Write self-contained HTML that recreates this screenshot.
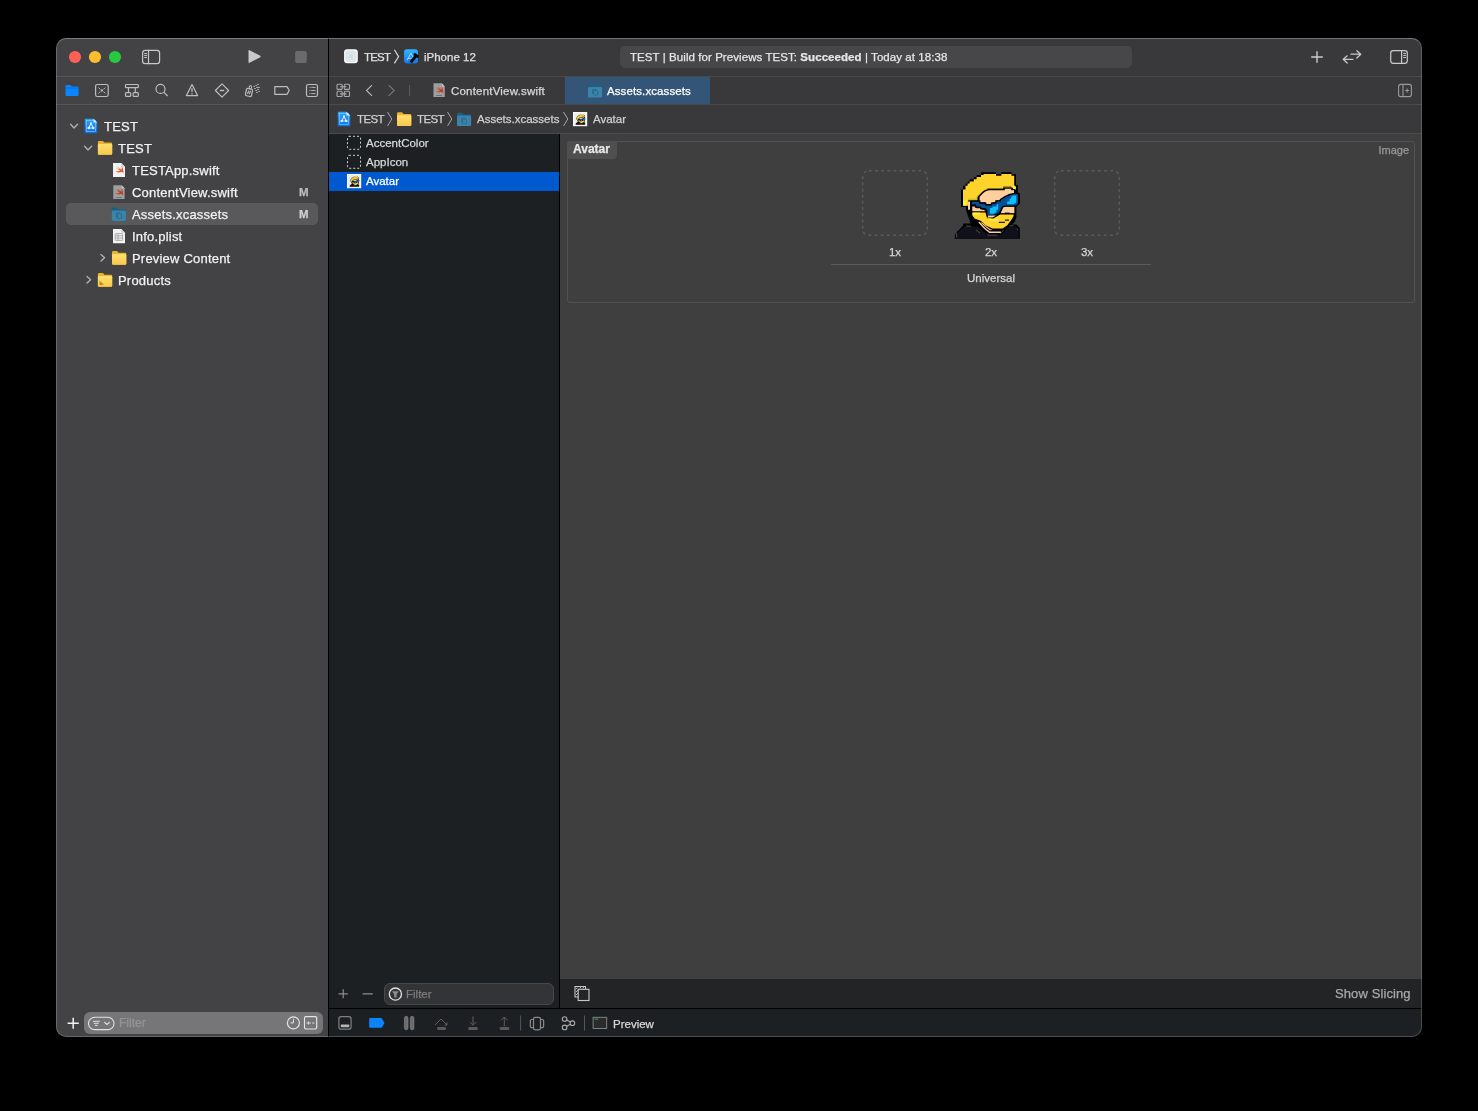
<!DOCTYPE html>
<html><head><meta charset="utf-8">
<style>
*{margin:0;padding:0;box-sizing:border-box}
html,body{width:1478px;height:1111px;background:#000;overflow:hidden;font-family:"Liberation Sans",sans-serif;color:#dfdfdf}
.a{position:absolute}
.t{position:absolute;white-space:nowrap;line-height:1;will-change:transform;-webkit-text-stroke:0.25px currentColor}
#clip{position:absolute;left:0;top:0;width:1478px;height:1111px;clip-path:inset(38px 56px 74px 56px round 10px)}
#ov{position:absolute;left:0;top:0}
#winb{position:absolute;left:56px;top:38px;width:1366px;height:999px;border-radius:10px;border:1px solid rgba(255,255,255,0.2);border-top-color:rgba(255,255,255,0.3);pointer-events:none}
</style></head><body>
<div id="clip">
<div class="a" style="left:56px;top:38px;width:272px;height:999px;background:#434345;"></div>
<div class="a" style="left:56px;top:76px;width:272px;height:1px;background:#555557;"></div>
<div class="a" style="left:56px;top:104px;width:272px;height:1px;background:#555557;"></div>
<div class="a" style="left:328px;top:38px;width:1px;height:999px;background:#000;"></div>
<div class="a" style="left:329px;top:38px;width:1093px;height:38px;background:#39393c;"></div>
<div class="a" style="left:329px;top:76px;width:1093px;height:1px;background:#4a4a4c;"></div>
<div class="a" style="left:329px;top:77px;width:1093px;height:27px;background:#39393c;"></div>
<div class="a" style="left:565px;top:77px;width:145px;height:27px;background:#335577;"></div>
<div class="a" style="left:329px;top:104px;width:1093px;height:1px;background:#4a4a4c;"></div>
<div class="a" style="left:329px;top:105px;width:1093px;height:28px;background:#39393c;"></div>
<div class="a" style="left:329px;top:133px;width:1093px;height:1px;background:#4a4a4c;"></div>
<div class="a" style="left:329px;top:134px;width:230px;height:874px;background:#1d2022;"></div>
<div class="a" style="left:329px;top:172px;width:230px;height:19px;background:#0059cf;"></div>
<div class="a" style="left:559px;top:134px;width:1px;height:874px;background:#000;"></div>
<div class="a" style="left:560px;top:134px;width:862px;height:845px;background:#3f3f3f;"></div>
<div class="a" style="left:560px;top:979px;width:862px;height:29px;background:#232426;"></div>
<div class="a" style="left:329px;top:1008px;width:1093px;height:1px;background:#000;"></div>
<div class="a" style="left:329px;top:1009px;width:1093px;height:28px;background:#1d2022;"></div>
<div class="a" style="left:66px;top:203px;width:252px;height:22px;background:#59595b;border-radius:5px;"></div>
<div class="t" style="top:52.27px;font-size:11.5px;color:#e0e0e0;letter-spacing:-0.8px;left:363.5px;">TEST</div>
<div class="t" style="top:52.27px;font-size:11.5px;color:#e0e0e0;left:423.5px;">iPhone 12</div>
<div class="a" style="left:620px;top:46px;width:512px;height:22px;background:#474749;border-radius:5px;"></div>
<div class="t" style="top:52.27px;font-size:11.5px;color:#e6e6e6;letter-spacing:0.07px;left:629.5px;">TEST | Build for Previews TEST: <b>Succeeded</b> | Today at 18:38</div>
<div class="t" style="top:85.77px;font-size:11.5px;color:#d8d8d8;letter-spacing:0.2px;left:450.5px;">ContentView.swift</div>
<div class="t" style="top:85.77px;font-size:11.5px;color:#ffffff;letter-spacing:0.1px;left:606.5px;">Assets.xcassets</div>
<div class="t" style="top:114.27px;font-size:11.5px;color:#d0d0d0;letter-spacing:-0.6px;left:356.5px;">TEST</div>
<div class="t" style="top:114.27px;font-size:11.5px;color:#d0d0d0;letter-spacing:-0.6px;left:416.5px;">TEST</div>
<div class="t" style="top:114.27px;font-size:11.5px;color:#d0d0d0;left:476.5px;">Assets.xcassets</div>
<div class="t" style="top:114.27px;font-size:11.5px;color:#d0d0d0;left:592.5px;">Avatar</div>
<div class="t" style="top:120.00px;font-size:13px;color:#f2f2f2;letter-spacing:0.2px;left:104px;">TEST</div>
<div class="t" style="top:142.00px;font-size:13px;color:#f2f2f2;letter-spacing:0.2px;left:118px;">TEST</div>
<div class="t" style="top:164.00px;font-size:13px;color:#f2f2f2;letter-spacing:0.2px;left:132px;">TESTApp.swift</div>
<div class="t" style="top:186.00px;font-size:13px;color:#f2f2f2;letter-spacing:0.2px;left:132px;">ContentView.swift</div>
<div class="t" style="top:208.00px;font-size:13px;color:#f2f2f2;letter-spacing:0.2px;left:132px;">Assets.xcassets</div>
<div class="t" style="top:230.00px;font-size:13px;color:#f2f2f2;letter-spacing:0.2px;left:132px;">Info.plist</div>
<div class="t" style="top:252.00px;font-size:13px;color:#f2f2f2;letter-spacing:0.2px;left:132px;">Preview Content</div>
<div class="t" style="top:274.00px;font-size:13px;color:#f2f2f2;letter-spacing:0.2px;left:118px;">Products</div>
<div class="t" style="top:186.67px;font-size:11.5px;color:#bdbdbd;font-weight:700;left:298.8px;">M</div>
<div class="t" style="top:208.67px;font-size:11.5px;color:#d0d0d0;font-weight:700;left:298.8px;">M</div>
<div class="a" style="left:84px;top:1012px;width:239px;height:22px;background:#767678;border-radius:6px;"></div>
<div class="t" style="top:1016.84px;font-size:12px;color:#949496;left:118.5px;">Filter</div>
<div class="t" style="top:138.27px;font-size:11.5px;color:#d8d8d8;left:365.5px;">AccentColor</div>
<div class="t" style="top:157.27px;font-size:11.5px;color:#d8d8d8;left:365.5px;">AppIcon</div>
<div class="t" style="top:176.27px;font-size:11.5px;color:#ffffff;left:365.5px;">Avatar</div>
<div class="a" style="left:384px;top:983px;width:170px;height:22px;background:#333436;border-radius:6px;border:1px solid #47484a;"></div>
<div class="t" style="top:989.27px;font-size:11.5px;color:#7c7c7e;left:406px;">Filter</div>
<div class="t" style="top:987.00px;font-size:13px;color:#a9a9a9;letter-spacing:0.1px;left:1334.5px;">Show Slicing</div>
<div class="t" style="top:1018.77px;font-size:11.5px;color:#d8d8d8;left:612.5px;">Preview</div>
<div class="a" style="left:567px;top:141px;width:848px;height:162px;border:1px solid #525252;border-radius:3px;"></div>
<div class="a" style="left:567px;top:141px;width:50px;height:18px;background:#4f4f4f;border-radius:3px 0 4px 0;"></div>
<div class="t" style="top:143.14px;font-size:12px;color:#e8e8e8;font-weight:700;left:572.5px;">Avatar</div>
<div class="t" style="top:144.69px;font-size:11px;color:#9a9a9a;left:809px;width:600px;text-align:right;">Image</div>
<div class="t" style="top:246.77px;font-size:11.5px;color:#d6d6d6;left:595px;width:600px;text-align:center;">1x</div>
<div class="t" style="top:246.77px;font-size:11.5px;color:#d6d6d6;left:691px;width:600px;text-align:center;">2x</div>
<div class="t" style="top:246.77px;font-size:11.5px;color:#d6d6d6;left:787px;width:600px;text-align:center;">3x</div>
<div class="a" style="left:831px;top:264px;width:320px;height:1px;background:#5a5a5a;"></div>
<div class="t" style="top:272.77px;font-size:11.5px;color:#d6d6d6;left:691px;width:600px;text-align:center;">Universal</div>
<svg id="ov" width="1478" height="1111" viewBox="0 0 1478 1111">
<!-- traffic lights -->
<circle cx="75" cy="57" r="6.1" fill="#ff5f57"/>
<circle cx="95" cy="57" r="6.1" fill="#febc2e"/>
<circle cx="115" cy="57" r="6.1" fill="#28c840"/>
<!-- sidebar toggle -->
<g fill="none" stroke="#c8c8c8" stroke-width="1.2">
<rect x="142.6" y="50.4" width="17" height="13.2" rx="2.6"/>
<line x1="148.5" y1="50.4" x2="148.5" y2="63.6"/>
</g>
<g stroke="#c8c8c8" stroke-width="1" stroke-linecap="round">
<line x1="144.6" y1="53.5" x2="146.6" y2="53.5"/><line x1="144.6" y1="55.5" x2="146.6" y2="55.5"/><line x1="144.6" y1="57.5" x2="146.6" y2="57.5"/>
</g>
<!-- play / stop -->
<path d="M248.5 50.8 Q248.5 49.7 249.5 50.2 L260.3 55.8 Q261.2 56.5 260.3 57.2 L249.5 62.8 Q248.5 63.3 248.5 62.2 Z" fill="#c9c9c9"/>
<rect x="295.1" y="51.1" width="11.7" height="11.8" rx="2" fill="#6b6b6b"/>
<!-- nav tabs -->
<path d="M65.5 86.2 Q65.5 85 66.7 85 L70.5 85 L71.8 86.4 L77.5 86.4 Q78.6 86.4 78.6 87.5 L78.6 95 Q78.6 96.1 77.5 96.1 L66.6 96.1 Q65.5 96.1 65.5 95 Z" fill="#0a84ff"/>
<line x1="65.5" y1="88" x2="78.6" y2="88" stroke="#0667cc" stroke-width="0.8"/>
<g fill="none" stroke="#bdbdbd" stroke-width="1.2">
<rect x="95.6" y="84.5" width="12.6" height="12" rx="1.8"/>
<path d="M98.6 87.6 L100.4 89.4 M105.2 87.6 L103.4 89.4 M98.6 93.4 L100.4 91.6 M105.2 93.4 L103.4 91.6" stroke-width="1"/>
<rect x="125.5" y="84.5" width="12.8" height="3.2" rx="0.8"/>
<path d="M128.5 87.7 V92.6 M135.3 87.7 V92.6"/>
<rect x="125.5" y="92.6" width="5.2" height="3.8" rx="1"/>
<rect x="133.1" y="92.6" width="5.2" height="3.8" rx="1"/>
<circle cx="160.5" cy="88.9" r="4.5"/>
<path d="M163.7 92.1 L167.6 96"/>
<path d="M192 84.6 L197.6 95.6 L186.4 95.6 Z" stroke-linejoin="round"/>
<path d="M222 83.9 L228.6 90.5 L222 97.1 L215.4 90.5 Z" stroke-linejoin="round"/>
<path d="M219.8 90.5 H224.2" stroke-width="1.4"/>
<g transform="translate(249 92.4) rotate(12)"><rect x="-3.1" y="-3.6" width="6.2" height="7.4" rx="1.3"/><rect x="-0.9" y="-6.8" width="2.4" height="3.2" rx="1.1" stroke-width="1"/><path d="M-1.3 1.8 L-0.6 -1.6 L0.7 1.6 L1.3 -1.8" stroke-width="0.9"/></g>
<path d="M274.8 86.6 H287 L289.2 90.5 L287 94.4 H274.8 Z" stroke-linejoin="round"/>
<rect x="306.5" y="84.5" width="11" height="12" rx="1.8"/>
</g>
<circle cx="222" cy="90.5" r="0" fill="#bdbdbd"/>
<circle cx="101.9" cy="90.5" r="1.15" fill="#bdbdbd"/>
<path d="M192 88.2 V92" stroke="#bdbdbd" stroke-width="1.3"/><circle cx="192" cy="93.8" r="0.7" fill="#bdbdbd"/>
<g stroke="#bdbdbd" stroke-width="0.9" stroke-linecap="round">
<path d="M253.3 86.4 H254.9 M255.3 85.4 H256.9 M257.2 84.4 H258.9 M256.1 87.4 H259.9 M254.1 88.5 H255.8 M257.2 89.4 H258.9 M255.3 90.5 H256.9 M258.3 91.4 H259.9 M256.1 92.4 H257.8" stroke-linecap="butt"/>
<path d="M311.6 87.4 H315.2 M311.6 90.5 H315.2 M311.6 93.6 H315.2"/><path d="M309.4 87.4 H310.4 M309.4 90.5 H310.4 M309.4 93.6 H310.4" stroke="#8a8a8a"/>
</g>
<!-- editor toolbar: scheme -->
<rect x="344.1" y="49.3" width="13.7" height="14" rx="3" fill="#ffffff"/><rect x="345.3" y="50.5" width="11.3" height="11.6" rx="2" fill="#dfe6eb"/><circle cx="351" cy="56.3" r="2" fill="#d0dbe3"/>
<path d="M394.4 49.8 L398.6 56.6 L394.4 63.4" fill="none" stroke="#dedede" stroke-width="1.1"/>
<defs><linearGradient id="gblue" x1="0" y1="0" x2="0" y2="1"><stop offset="0" stop-color="#35b5fb"/><stop offset="1" stop-color="#1474e8"/></linearGradient></defs>
<rect x="404" y="49.3" width="14" height="14.2" rx="3" fill="url(#gblue)"/>
<path d="M407 60.5 L410.8 53.2 L413.2 57.5 M407.6 58.3 H412.6" stroke="#cfeaff" stroke-width="0.9" fill="none" opacity="0.8"/>
<g transform="translate(414 58.3) rotate(-52)"><rect x="-5.2" y="-1.5" width="9" height="3" fill="#0b0b0b"/><rect x="2.2" y="-2.8" width="2.8" height="5.6" fill="#0b0b0b"/></g>
<!-- right toolbar -->
<g fill="none" stroke="#cacaca" stroke-width="1.4">
<path d="M1317 51.2 V62.8 M1311.2 57 H1322.8"/>
</g>
<g fill="none" stroke="#cacaca" stroke-width="1.2" stroke-linecap="round" stroke-linejoin="round">
<path d="M1351 54.2 H1360.8 M1356.8 50.7 L1360.8 54.2 L1356.8 58"/>
<path d="M1343.2 59.3 H1353 M1347.2 55.8 L1343.2 59.3 L1347.2 63"/>
</g>
<g fill="none" stroke="#cacaca" stroke-width="1.2">
<rect x="1390.7" y="50.7" width="16.6" height="12.6" rx="2.5"/>
<line x1="1401.6" y1="50.7" x2="1401.6" y2="63.3"/>
</g>
<g stroke="#cacaca" stroke-width="1" stroke-linecap="round">
<line x1="1403.6" y1="53.4" x2="1405.6" y2="53.4"/><line x1="1403.6" y1="55.4" x2="1405.6" y2="55.4"/><line x1="1403.6" y1="57.5" x2="1405.6" y2="57.5"/>
</g>
<!-- tab bar icons -->
<g fill="none" stroke="#a8a8a8" stroke-width="1.1">
<rect x="337" y="84.2" width="5.2" height="5.2" rx="1"/>
<rect x="344.3" y="84.2" width="5.2" height="5.2" rx="1"/>
<rect x="337" y="91.3" width="5.2" height="5.2" rx="1"/>
<rect x="344.3" y="91.3" width="5.2" height="5.2" rx="1"/>
<path d="M340 86.8 H346.5 M340 93.9 H346.5"/>
</g>
<g fill="none" stroke="#b8b8b8" stroke-width="1.1">
<path d="M372 85.2 L366.5 90.5 L372 95.8"/>
</g>
<g fill="none" stroke="#777" stroke-width="1.1">
<path d="M388.6 85.2 L394.2 90.5 L388.6 95.8"/>
</g>
<line x1="409.5" y1="85" x2="409.5" y2="96" stroke="#5a5a5c" stroke-width="1"/>
<g fill="none" stroke="#9a9a9a" stroke-width="1.1">
<rect x="1398.6" y="84.4" width="12.8" height="12.2" rx="2.2"/>
<line x1="1403" y1="84.4" x2="1403" y2="96.6"/>
<path d="M1405.2 90.5 H1409 M1407.1 88.6 V92.4"/>
</g>
<defs>
<linearGradient id="gproj" x1="0" y1="0" x2="0" y2="1"><stop offset="0" stop-color="#2aa6f6"/><stop offset="1" stop-color="#0a6fe4"/></linearGradient>
<linearGradient id="gfold" x1="0" y1="0" x2="0" y2="1"><stop offset="0" stop-color="#ffdf72"/><stop offset="1" stop-color="#f8c84a"/></linearGradient>
<linearGradient id="gbird" x1="0" y1="0" x2="1" y2="1"><stop offset="0" stop-color="#f9883a"/><stop offset="1" stop-color="#e8342a"/></linearGradient>
<g id="proj">
  <path d="M0 0 H8.7 L12.4 3.7 V14.4 H0 Z" fill="url(#gproj)"/>
  <path d="M8.7 0 V3.7 H12.4 Z" fill="#f4f8ff"/>
  <rect x="1.6" y="1.8" width="9.2" height="11" fill="none" stroke="#9fd3ff" stroke-width="0.7" opacity="0.8"/>
  <g stroke="#d8eeff" stroke-width="1.1" fill="none" opacity="0.9"><path d="M6.2 4.6 L3.9 9.2 M6.2 4.6 L8.5 9.2 M3.9 9.2 H8.5"/></g>
  <circle cx="6.2" cy="4.6" r="1.1" fill="#d8eeff"/><circle cx="3.9" cy="9.2" r="1.3" fill="#d8eeff"/><circle cx="8.5" cy="9.2" r="1.3" fill="#d8eeff"/>
</g>
<g id="folderY">
  <path d="M0 1.3 Q0 0 1.3 0 H4.6 Q5.3 0 5.8 0.7 L6.4 1.6 H13 Q14.3 1.6 14.3 2.9 V12.4 Q14.3 13.7 13 13.7 H1.3 Q0 13.7 0 12.4 Z" fill="#e9b32c"/>
  <rect x="0" y="2.9" width="14.3" height="10.8" rx="1.3" fill="url(#gfold)"/>
</g>
<g id="folderT">
  <path d="M0 1.3 Q0 0 1.3 0 H4.6 Q5.3 0 5.8 0.7 L6.4 1.6 H12.8 Q14.1 1.6 14.1 2.9 V12.1 Q14.1 13.3 12.8 13.3 H1.3 Q0 13.3 0 12.1 Z" fill="#1c5f86"/>
  <rect x="0" y="2.8" width="14.1" height="10.5" rx="1.3" fill="#3b84a8"/>
  <g fill="none" stroke="#27698e" stroke-width="0.9"><rect x="5.6" y="6.3" width="4" height="4.6" rx="0.8"/><path d="M4.6 9.6 V5.8 Q4.6 5.2 5.2 5.2 H8.4"/></g>
</g>
<g id="swiftW">
  <path d="M0 0 H8.3 L12 3.7 V14 H0 Z" fill="#f2f2f2"/>
  <path d="M8.3 0 V3.7 H12 Z" fill="#cfcfcf"/>
  <path d="M 7.86 8.90 C 6.30 9.71 4.25 9.64 2.20 7.64 C 3.84 8.38 5.89 8.53 7.12 7.79 C 5.32 6.68 3.68 5.27 2.61 3.94 C 4.25 5.42 6.30 6.53 6.96 6.90 C 5.89 5.79 4.82 4.31 4.25 3.20 C 5.89 4.83 7.94 6.16 8.60 6.68 C 9.01 5.42 8.76 4.09 8.10 3.20 C 9.99 4.31 10.40 6.53 9.99 7.64 C 10.56 8.38 10.56 9.49 10.24 10.23 C 9.58 9.12 8.76 8.75 7.86 8.90 Z" fill="url(#gbird)"/>
</g>
<g id="swiftG">
  <path d="M0 0 H8.3 L11.3 3.1 V13.8 H0 Z" fill="#9e9e9e"/>
  <path d="M8.3 0 V3.1 H11.3 Z" fill="#c4c4c4"/>
  <path d="M 7.38 8.74 C 5.90 9.54 3.95 9.46 2.00 7.52 C 3.56 8.24 5.51 8.38 6.68 7.66 C 4.96 6.58 3.40 5.22 2.39 3.92 C 3.95 5.36 5.90 6.44 6.52 6.80 C 5.51 5.72 4.50 4.28 3.95 3.20 C 5.51 4.78 7.46 6.08 8.08 6.58 C 8.47 5.36 8.24 4.06 7.62 3.20 C 9.41 4.28 9.80 6.44 9.41 7.52 C 9.96 8.24 9.96 9.32 9.64 10.04 C 9.02 8.96 8.24 8.60 7.38 8.74 Z" fill="#c7391f"/>
  <rect x="2.5" y="11.8" width="6" height="0.8" fill="#6a6a6a"/>
</g>
<g id="plist">
  <path d="M0 0 H8.3 L12 3.7 V14.3 H0 Z" fill="#f2f2f2"/>
  <path d="M8.3 0 V3.7 H12 Z" fill="#cfcfcf"/>
  <g fill="none" stroke="#9a9a9a" stroke-width="0.8"><rect x="2.2" y="4.6" width="7.4" height="6.8" rx="0.6"/><path d="M2.2 6.8 H9.6 M2.2 9.1 H9.6 M5 4.6 V11.4"/></g>
</g>
<g id="avatar" stroke-linejoin="miter">
  <path fill="#000" d="M33 4.3 H46 V5.9 H51.2 V4.3 H61.5 V5.9 H66 V16.9 H67.8 V25.8 H70 V35.8 L66.4 36.6 V49.6 L64.5 54.5 L61.5 56.6 H66.4 L69.8 60 V70.8 H4.8 V67.1 L7 63.5 L9 61.9 L11.3 59.3 L13.2 57.4 V55.4 H20.5 L19.5 52 L18 48.5 L17 45 L16 42 V39 H11 V21.6 H13 V17.8 H15.5 V15.5 H17.6 V13.5 H19.6 V11.2 H23.8 V9 H26.6 V7 H31 V4.3 Z"/>
  <path fill="#ffd42a" d="M33.6 6 H46 V7.7 H51.4 V6 H61.5 V7.7 H64.2 V17.2 L65.8 19 V21.8 H63.2 V20.1 H61.2 V18.4 H53.4 V20.1 H37.6 V21.2 L33.1 23 L31.2 24.8 L29.4 26.7 L27.3 28.7 V32.2 H18 V37.8 H13 V21.6 H15.5 V17.8 H17.6 V15.5 H19.6 V13.5 H23.8 V11.2 H26.6 V9 H31 V7 H33.6 Z"/>
  <path fill="#c8bf1c" d="M18 30.6 H26 L27.5 27.6 L29.6 25.5 L33.2 22.6 L37.6 20.3 H53.4 V18.4 H61 V19.9 H53.4 V21.1 H38.4 L34 23.2 L31.5 25.3 L29.4 27.3 L27.3 29.6 V32.2 H18 Z" opacity="0.85"/>
  <path fill="#ffff3a" d="M13 32.6 H16.5 V37.8 H13 Z M61.9 18.2 H65.8 V21.8 H63.5 Z" opacity="0.75"/>
  <path fill="#ffcf9e" d="M18 33.5 H20 V41.7 H18 Z"/>
  <path fill="#ffcf9e" stroke="#000" stroke-width="2.8" paint-order="stroke" d="M38.8 22.3 H54.8 V20.8 H61.2 V22.3 H64 V25.9 L59.3 26.9 L55 28.9 L51.3 30.9 V32.4 H46.8 V34.2 H42.3 V35.9 H35.3 V34.3 H29.6 V28.8 L31.4 26.9 L33.3 25.1 L35.3 23.6 Z"/>
  <path fill="#ffcf9e" stroke="#000" stroke-width="2.6" paint-order="stroke" d="M22.3 38.4 H26.3 V40.2 H31.4 V41.8 H35.5 V44.2 H22.3 Z"/>
  <path fill="#ffcf9e" stroke="#000" stroke-width="2.4" paint-order="stroke" d="M53.5 38.6 H64.4 V45.6 H50.6 Z"/>
  <path fill="#000" d="M54.8 44.6 H59.6 V46 H54.8 Z"/>
  <path fill="#005196" stroke="#000" stroke-width="2.6" paint-order="stroke" d="M21.8 33.8 H29.2 V35.9 H35.1 V37.4 H42.1 V35.8 H46.5 V33.6 H51 V31.9 L55 29.5 L59.3 27.2 L64.5 26 H68 V35.5 L65.7 37.5 H54.9 L52 38.5 L49.2 44.4 L43.8 47 H37.3 V41.4 H35.7 V40 H31.3 V38.4 H26.2 V36.2 H21.8 Z"/>
  <path fill="#0cc0f7" d="M62.8 27.6 H66.3 V34.6 L63.5 36.3 H57.2 V33.6 H59.5 V30.6 H61.2 V28.8 Z"/>
  <path fill="#0cc0f7" d="M46.5 36.2 H48.1 V41.7 H46.5 V44 L44 45.7 H40 V40 H42.4 V38.4 H46.5 Z"/>
  <path fill="#ffcf9e" d="M37.6 47.6 H44 L47 47.8 V50.4 H37.6 Z"/>
  <path fill="#ffd42a" stroke="#000" stroke-width="2.4" paint-order="stroke" d="M22.4 44.4 H35.5 L36.6 48.8 L37.6 50.6 H43.2 L47.2 48.3 L50.2 46.4 H63.6 V48 L61.6 51.4 L59.3 54.6 L57.3 57.2 L52.6 60.6 H42.6 L38.6 58.8 L35.2 57 L32.8 54.6 L30.6 52.8 L24.6 50.6 L22.4 47.4 Z"/>
  <path fill="#ffff44" d="M22.6 44.6 H30 V46.6 L26 47 H22.6 Z M36.8 49 L44 51.4 L49 50.2 L47 52.4 L40 52.6 Z" opacity="0.75"/>
  <path fill="#1c1e2e" d="M48.7 53.7 H54.9 V54.9 H48.7 Z M54.9 51.6 H59 V52.8 H54.9 Z"/>
  <path fill="#ffcf9e" d="M44.5 52.8 H48.7 V53.7 H44.5 Z"/>
  <path fill="#10111a" d="M5.8 70.6 V67.6 L7.8 64.6 L9.8 62.6 L11.8 60.4 L14.2 58.6 H27.2 L31 61.6 L36 65.6 L40 66.8 H51.2 L54.6 63.6 L57.8 59.8 L59.8 58.4 H65.6 L68.6 61.2 V70.6 Z"/>
  <path fill="none" stroke="#ffcf9e" stroke-width="1.4" d="M28.8 54 L34.6 60.2 L39.6 64.2 H50.8"/>
  <path fill="none" stroke="#ffcf9e" stroke-width="1.1" d="M31.4 54.6 L36 58.6 L40 61.8 H41.5"/>
  <path fill="none" stroke="#4a4b52" stroke-width="1" d="M6.6 64.6 V69.6 M16 58.2 H21 M26 62 L30 65 M37.5 67.2 H47.5 M50 66 L53.6 62.6 M59.5 57.8 H63.5 M66.5 60.5 L68 62"/>
</g>
</defs>
<!-- tree -->
<g fill="none" stroke="#b0b0b0" stroke-width="1.4" stroke-linecap="round" stroke-linejoin="round">
<path d="M70.6 124.3 L74 127.9 L77.6 124.3"/>
<path d="M84.6 146.3 L88 149.9 L91.6 146.3"/>
<path d="M101 254.6 L104.6 257.8 L101 261"/>
<path d="M87 276.6 L90.6 279.8 L87 283"/>
</g>
<use href="#proj" x="84.8" y="118.8"/>
<use href="#folderY" x="97.9" y="141"/>
<use href="#swiftW" x="113" y="163"/>
<use href="#swiftG" x="113.3" y="185.2"/>
<use href="#folderT" x="111.8" y="207.6"/>
<use href="#plist" x="113" y="229"/>
<use href="#folderY" x="112" y="251.1"/>
<use href="#folderY" x="97.9" y="273.1"/>
<path d="M99.5 285 L99.5 280.5 L104 285 Z" fill="#c08a17"/>
<!-- tab icons -->
<use href="#swiftG" x="433.5" y="83.3"/>
<use href="#folderT" x="588" y="84.2"/>
<!-- breadcrumb -->
<use href="#proj" x="337.8" y="111.8"/>
<use href="#folderY" x="397" y="112.3"/>
<use href="#folderT" x="457" y="112.8"/>
<g fill="none" stroke="#a8a8a8" stroke-width="1"><path d="M387.5 112 L391.8 119 L387.5 126 M447.5 112 L451.8 119 L447.5 126 M563.5 112 L567.8 119 L563.5 126"/></g>
<rect x="573" y="112" width="14.2" height="14.2" fill="#ffffff"/>
<rect x="573.8" y="112.8" width="12.6" height="12.6" fill="#f0f0f0"/>
<use href="#avatar" transform="translate(575 114.2) scale(0.145)"/>
<!-- list icons -->
<g fill="none" stroke="#d0d0d0" stroke-width="1" stroke-dasharray="2 2">
<rect x="347.5" y="136.3" width="13" height="13" rx="1.5"/>
<rect x="347.5" y="155.3" width="13" height="13" rx="1.5"/>
</g>
<rect x="347" y="174" width="14.2" height="14.2" fill="#ffffff"/>
<rect x="347.8" y="174.8" width="12.6" height="12.6" fill="#ececec"/>
<use href="#avatar" transform="translate(349 176.2) scale(0.145)"/>
<g fill="none" stroke="#5a5a5a" stroke-width="1.4" stroke-dasharray="3 3.2"><rect x="862.7" y="170.7" width="64.6" height="64.6" rx="6"/><rect x="1054.7" y="170.7" width="64.6" height="64.6" rx="6"/></g>
<!-- big avatar -->
<use href="#avatar" transform="translate(950 168)"/>
<!-- sidebar filter bar -->
<path d="M73.2 1017.8 V1028.8 M67.6 1023.3 H78.8" stroke="#f2f2f2" stroke-width="1.5"/>
<rect x="88.5" y="1017.3" width="25.5" height="12.3" rx="6.15" fill="none" stroke="#e2e2e2" stroke-width="1.1"/>
<g stroke="#e2e2e2" stroke-width="1" stroke-linecap="round"><path d="M93.2 1021.3 H99.4 M94.2 1023.3 H98.4 M95.3 1025.4 H97.3"/></g>
<path d="M104.6 1022.3 L107 1024.5 L109.4 1022.3" fill="none" stroke="#e2e2e2" stroke-width="1.1" stroke-linecap="round"/>
<circle cx="293.4" cy="1022.9" r="6" fill="none" stroke="#e4e4e4" stroke-width="1.2"/>
<path d="M293.4 1018.7 V1022.9 H290.4" fill="none" stroke="#e4e4e4" stroke-width="1"/>
<rect x="304.5" y="1016.7" width="12.2" height="12.3" rx="1.4" fill="none" stroke="#e4e4e4" stroke-width="1.2"/>
<path d="M306.5 1023 H310.8 M308.4 1021.4 V1024.6 M312.2 1023 H314.5" stroke="#e4e4e4" stroke-width="0.9"/>
<!-- list filter -->
<path d="M343.2 989.3 V998.3 M338.6 993.8 H347.8 M362.6 993.8 H372.8" stroke="#8c8c8c" stroke-width="1.2"/>
<circle cx="395.4" cy="994.1" r="6.1" fill="none" stroke="#e2e2e2" stroke-width="1.3"/>
<path d="M392 991.3 H398.8 L396.6 994.3 V997.5 H394.2 V994.3 Z" fill="#8e8e8e"/>
<!-- editor bottom bar icon -->
<g fill="none" stroke="#c8c8c8" stroke-width="1.1">
<path d="M578.2 997 H575 V986.5 H585.5 V989"/>
<rect x="578.2" y="989.3" width="10.8" height="11.2"/>
</g>
<g stroke="#c8c8c8" stroke-width="0.9"><path d="M576 989 L577.5 987.5 M576 992 L578 990 M576 995 L578 993 M579.5 988.5 L581 987 M582.5 988.5 L584 987"/></g>
<!-- debug bar -->
<g fill="none" stroke="#7e7e7e" stroke-width="1.2">
<rect x="338.9" y="1016.7" width="12.2" height="12.4" rx="2.2"/>
</g>
<rect x="340.8" y="1024.4" width="8.5" height="2.8" rx="0.6" fill="#b4b4b4"/>
<path d="M369.2 1019 Q369.2 1018.1 370.1 1018.1 H381.6 L384.5 1022.9 L381.6 1027.7 H370.1 Q369.2 1027.7 369.2 1026.8 Z" fill="#0a84ff"/>
<rect x="404.4" y="1016.3" width="3.6" height="13.6" rx="1.8" fill="#6c6c6c" stroke="#8a8a8a" stroke-width="0.6"/>
<rect x="410.3" y="1016.3" width="3.6" height="13.6" rx="1.8" fill="#6c6c6c" stroke="#8a8a8a" stroke-width="0.6"/>
<path d="M435 1025 L441 1019 L447 1025 M447 1025 V1022.5 M447 1025 H444.5" fill="none" stroke="#5e5e5e" stroke-width="1"/>
<rect x="437.2" y="1027" width="8.8" height="3" rx="1.2" fill="#5a5a5a"/>
<path d="M473 1016.5 V1025 M469.8 1022 L473 1025.2 L476.2 1022" fill="none" stroke="#5e5e5e" stroke-width="1"/>
<rect x="468.3" y="1027" width="9.5" height="3" rx="1.2" fill="#5a5a5a"/>
<path d="M504.3 1026 V1017.2 M501 1020.3 L504.3 1017 L507.5 1020.3" fill="none" stroke="#5e5e5e" stroke-width="1"/>
<rect x="499.7" y="1027" width="9.5" height="3" rx="1.2" fill="#5a5a5a"/>
<line x1="520.6" y1="1015.5" x2="520.6" y2="1030.8" stroke="#555" stroke-width="1"/>
<g fill="none" stroke="#8a8a8a" stroke-width="1.2">
<rect x="533.5" y="1017.3" width="7" height="12.6" rx="1.8"/>
<path d="M533.5 1019.5 H531.6 Q530.4 1019.5 530.4 1020.7 V1026.5 Q530.4 1027.7 531.6 1027.7 H533.5 M540.5 1019.5 H542.4 Q543.6 1019.5 543.6 1020.7 V1026.5 Q543.6 1027.7 542.4 1027.7 H540.5"/>
</g>
<g fill="none" stroke="#a8a8a8" stroke-width="1.1">
<circle cx="564.6" cy="1019" r="2.3"/><circle cx="572.4" cy="1023.2" r="2.3"/><circle cx="564.6" cy="1027.4" r="2.3"/>
<path d="M566.7 1020.1 L570.3 1022.1 M566.7 1026.3 L570.3 1024.3"/>
</g>
<line x1="584.5" y1="1015.5" x2="584.5" y2="1030.8" stroke="#555" stroke-width="1"/>
<rect x="593.1" y="1017.3" width="13.6" height="11.2" fill="#2a2b2d" stroke="#8a8a8a" stroke-width="0.9"/>
<rect x="594.6" y="1018.6" width="3.6" height="1" fill="#2fb54a"/>

</svg>
</div>
<div id="winb"></div>
</body></html>
